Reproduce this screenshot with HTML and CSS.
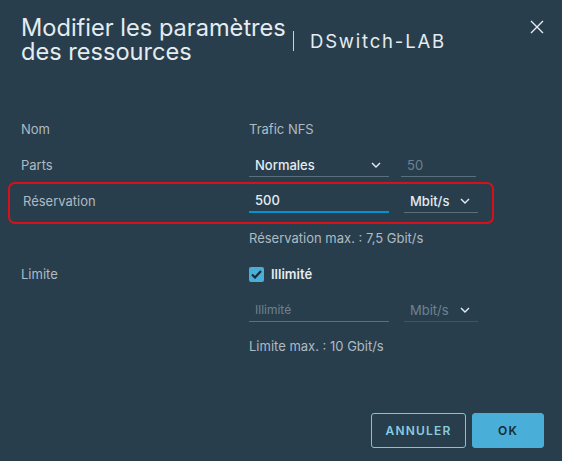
FILE: index.html
```html
<!DOCTYPE html>
<html lang="fr">
<head>
<meta charset="utf-8">
<link rel="stylesheet" href="styles.css">
</head>
<body>
<div class="modal">
  <header class="head">
    <h1 class="title"><span class="tl">Modifier les paramètres</span><span class="tl">des ressources</span></h1>
    <div class="sub">DSwitch-LAB</div>
    <button class="close" aria-label="Fermer">
      <svg width="14" height="14" viewBox="0 0 14 14"><path d="M1 1L13 13M13 1L1 13" stroke="#e4ecf1" stroke-width="1.4" fill="none"/></svg>
    </button>
  </header>
  <div class="form">
    <div class="row">
      <div class="label">Nom</div>
      <div class="val">Trafic NFS</div>
    </div>
    <div class="row">
      <div class="label">Parts</div>
      <div class="fields">
        <div class="select wide"><span class="bright">Normales</span><svg class="chev" width="10" height="6" viewBox="0 0 10 6"><path d="M1 1L5 5L9 1" stroke="#e4ecf1" stroke-width="1.4" fill="none"/></svg></div>
        <div class="input small dim">50</div>
      </div>
    </div>
    <div class="row hl">
      <div class="label">Réservation</div>
      <div class="fields">
        <div class="input wide focus bright">500</div>
        <div class="select unit"><span class="bright">Mbit/s</span><svg class="chev" width="10" height="6" viewBox="0 0 10 6"><path d="M1 1L5 5L9 1" stroke="#e4ecf1" stroke-width="1.4" fill="none"/></svg></div>
      </div>
    </div>
    <div class="help first">Réservation max. : 7,5 Gbit/s</div>
    <div class="row limit">
      <div class="label">Limite</div>
      <label class="check"><span class="box"><svg width="11" height="9" viewBox="0 0 11 9"><path d="M1 4.5L4 7.5L10 1" stroke="#1b2a32" stroke-width="2.2" fill="none"/></svg></span>Illimité</label>
    </div>
    <div class="row sub-row">
      <div class="label"></div>
      <div class="fields">
        <div class="input wide dim ph">Illimité</div>
        <div class="select unit off"><span>Mbit/s</span><svg class="chev" width="10" height="6" viewBox="0 0 10 6"><path d="M1 1L5 5L9 1" stroke="#e4ecf1" stroke-width="1.4" fill="none"/></svg></div>
      </div>
    </div>
    <div class="help">Limite max. : 10 Gbit/s</div>
  </div>
  <footer class="foot">
    <button class="btn outline">ANNULER</button>
    <button class="btn primary">OK</button>
  </footer>
</div>
</body>
</html>
```
FILE: styles.css
```css
* { box-sizing: border-box; }
html, body { margin: 0; padding: 0; }
body {
  width: 562px;
  height: 461px;
  background: #293e4c;
  font-family: "Inter", "Liberation Sans", sans-serif;
  color: #adbbc4;
  overflow: hidden;
}
.head {
  display: flex;
  align-items: center;
  padding: 14px 18px 0 21px;
  height: 66px;
}
.title {
  margin: 0;
  font-weight: 400;
  font-size: 23.6px;
  color: #e4ecf1;
  width: 272px;
  white-space: nowrap;
  display: flex;
  flex-direction: column;
}
.tl { display: block; height: 24px; line-height: 24px; }
.sub {
  border-left: 1px solid #c8d2d8;
  padding-left: 16px;
  margin-top: 2px;
  height: 20px;
  line-height: 20px;
  font-size: 18.5px;
  letter-spacing: 1.8px;
  color: #e4ecf1;
}
.close {
  margin-left: auto;
  background: none;
  border: 0;
  padding: 0;
  margin-top: -26px;
  width: 14px;
  height: 14px;
  display: flex;
}
.form { padding: 45px 0 0 0; font-size: 13px; }
.row {
  display: flex;
  align-items: center;
  height: 36px;
  padding-left: 21px;
}
.label { width: 228px; flex: none; }
.fields { display: flex; gap: 12px; align-items: center; }
.select, .input {
  height: 24px;
  display: flex;
  align-items: center;
  border-bottom: 1px solid #5b707c;
  padding: 0 6px;
}
.wide { width: 140px; }
.small { width: 75px; }
.unit { width: 74px; margin-left: 3px; }
.select { justify-content: space-between; padding-right: 8px; }
.chev { flex: none; }
.bright { color: #e4ecf1; font-weight: 500; }
.dim { color: #6e8290; }
.input.focus { border-bottom: 2px solid #0094d2; }
.hl {
  margin: -1px 68px 0 8px;
  padding: 0 0 4px 13px;
  height: 42px;
  border: 2px solid #d7101a;
  border-radius: 7px;
}
.hl .label { width: 226px; }
.help { padding-left: 249px; height: 36px; line-height: 36px; }
.help.first { margin-top: -4px; }
.check { display: flex; align-items: center; gap: 7px; color: #e4ecf1; font-weight: 600; }
.box {
  width: 15px; height: 15px;
  background: #49afd9;
  border-radius: 2px;
  display: flex; align-items: center; justify-content: center;
}
.ph { font-size: 12px; }
.off { border-bottom-color: #3f5563; }
.off span { color: #6e8290; }
.foot {
  display: flex;
  justify-content: flex-end;
  gap: 6px;
  padding: 0 18px 0 0;
  margin-top: 49px;
}
.btn {
  height: 35px;
  font-family: "Inter", "Liberation Sans", sans-serif;
  font-size: 12px;
  font-weight: 600;
  letter-spacing: 1.2px;
  border-radius: 3px;
  cursor: pointer;
}
.outline {
  width: 95px;
  background: transparent;
  border: 1px solid #79c6e6;
  color: #89cbdf;
}
.primary {
  width: 72px;
  background: #49afd9;
  border: 1px solid #49afd9;
  color: #1b2a32;
}
```
